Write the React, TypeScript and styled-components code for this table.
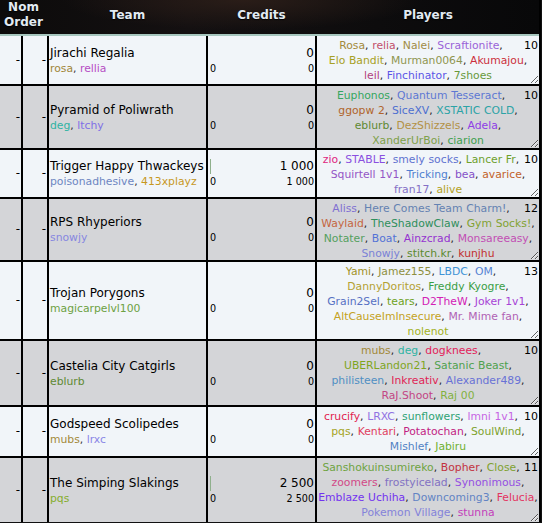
import React from "react";
import styled, { createGlobalStyle } from "styled-components";

const GlobalStyle = createGlobalStyle`
  html, body { margin: 0; padding: 0; background: #111; }
  body { font-family: "DejaVu Sans", Verdana, sans-serif; font-size: 12px; color: #000; }
`;

const COLS = "21px 24px 157px 107px 222px";

const Table = styled.div`
  width: 541px;
  background: #000;
  padding-right: 2px;
  box-sizing: border-box;
`;

const HeaderRow = styled.div`
  display: grid;
  grid-template-columns: ${COLS};
  column-gap: 2px;
  height: 34px;
  border-bottom: 2px solid #a6c6be;
  background: radial-gradient(ellipse 180px 30px at 45% 0%, #2a1d18 0%, rgba(20, 14, 12, 0) 100%),
    linear-gradient(90deg, #0c0b0b 0%, #141011 35%, #0d0c0d 70%, #080809 100%);
`;

const HeadCell = styled.div<{ $span?: number }>`
  grid-column: span ${(p) => p.$span ?? 1};
  display: flex;
  align-items: center;
  justify-content: center;
  text-align: center;
  font-weight: bold;
  font-size: 12px;
  line-height: 15px;
  color: #e2ebf3;
  text-shadow: 0 1px 1px #000;
  padding-bottom: 4px;
`;

const Row = styled.div`
  display: grid;
  grid-template-columns: ${COLS};
  column-gap: 2px;
  margin-bottom: 2px;
`;

const Cell = styled.div<{ $alt: boolean }>`
  background: ${(p) => (p.$alt ? "#d4d5d8" : "#f1f5f9")};
  min-width: 0;
`;

const DashCell = styled(Cell)`
  display: flex;
  align-items: center;
  justify-content: flex-end;
  padding-right: 1px;
  line-height: 15px;
`;

const TeamCell = styled(Cell)`
  display: flex;
  flex-direction: column;
  justify-content: center;
  padding-left: 1px;
  padding-top: 1px;
`;

const TeamName = styled.div`
  font-size: 12px;
  line-height: 15px;
  white-space: nowrap;
  color: #000;
`;

const Managers = styled.div`
  font-size: 10.8px;
  line-height: 15px;
  color: #333;
  white-space: nowrap;
`;

const Name = styled.span<{ $c: string }>`
  color: ${(p) => p.$c};
  white-space: nowrap;
`;

const Sep = styled.span`
  white-space: nowrap;
`;

const CreditsCell = styled(Cell)`
  display: flex;
  align-items: center;
  justify-content: space-between;
  padding: 1px 1px 0 2px;
`;

const CreditsLeft = styled.div`
  display: flex;
  flex-direction: column;
  align-items: flex-start;
`;

const Bar = styled.div<{ $w: number }>`
  height: 15px;
  width: ${(p) => p.$w}px;
  background: #8fb08c;
`;

const SmallNum = styled.div`
  font-size: 9.6px;
  line-height: 15px;
  white-space: nowrap;
`;

const CreditsRight = styled.div`
  display: flex;
  flex-direction: column;
  align-items: flex-end;
`;

const BigNum = styled.div`
  font-size: 12px;
  line-height: 15px;
  white-space: nowrap;
`;

const PlayersCell = styled(Cell)``;

const PlayersBox = styled.div<{ $h: number }>`
  height: ${(p) => p.$h}px;
  width: 222px;
  box-sizing: border-box;
  padding: 2px 1px 0 1px;
  text-align: center;
  font-size: 10.8px;
  word-spacing: 0.25px;
  line-height: 15px;
  color: #222;
  resize: both;
  overflow: hidden;
`;

const Count = styled.span`
  float: right;
  color: #000;
  font-size: 11px;
`;

type P = [string, string];

interface TeamRow {
  team: string;
  managers: P[];
  credits: string;
  bar: number;
  count: number;
  h: number;
  players: P[];
}

const rows: TeamRow[] = [
  {
    team: "Jirachi Regalia",
    managers: [["rosa", "#a0853a"], ["rellia", "#b64ec4"]],
    credits: "0",
    bar: 0,
    count: 10,
    h: 48,
    players: [
      ["Rosa", "#a38a3c"], ["relia", "#c2506b"], ["Nalei", "#a08c45"], ["Scraftionite", "#9a63d8"],
      ["Elo Bandit", "#a7a024"], ["Murman0064", "#8f9550"], ["Akumajou", "#cc2f3c"],
      ["leil", "#b2437e"], ["Finchinator", "#5b55e6"], ["7shoes", "#67993b"],
    ],
  },
  {
    team: "Pyramid of Poliwrath",
    managers: [["deg", "#2fb3a3"], ["ltchy", "#7f6fe6"]],
    credits: "0",
    bar: 0,
    count: 10,
    h: 62,
    players: [
      ["Euphonos", "#34a660"], ["Quantum Tesseract", "#5d78d3"], ["ggopw 2", "#b0642a"], ["SiceXV", "#4d6fd0"],
      ["XSTATIC COLD", "#2ba3a6"], ["eblurb", "#5e8933"], ["DezShizzels", "#b39145"], ["Adela", "#8f3de6"],
      ["XanderUrBoi", "#7fa14a"], ["ciarion", "#3fa04f"],
    ],
  },
  {
    team: "Trigger Happy Thwackeys",
    managers: [["poisonadhesive", "#6d86c2"], ["413xplayz", "#c7981f"]],
    credits: "1 000",
    bar: 1,
    count: 10,
    h: 47,
    players: [
      ["zio", "#e0267e"], ["STABLE", "#8a4fe0"], ["smely socks", "#5f72d0"], ["Lancer Fr", "#6ea02c"],
      ["Squirtell 1v1", "#9456c6"], ["Tricking", "#4f7fd0"], ["bea", "#8552c8"], ["avarice", "#c2622a"],
      ["fran17", "#8470c6"], ["alive", "#b3a11f"],
    ],
  },
  {
    team: "RPS Rhyperiors",
    managers: [["snowjy", "#8787e0"]],
    credits: "0",
    bar: 0,
    count: 12,
    h: 61,
    players: [
      ["Aliss", "#8070d2"], ["Here Comes Team Charm!", "#6482b2"], ["Waylaid", "#c4663f"],
      ["TheShadowClaw", "#2f8f5c"], ["Gym Socks!", "#82a232"], ["Notater", "#55a05e"], ["Boat", "#5372d6"],
      ["Ainzcrad", "#9432d0"], ["Monsareeasy", "#c24fb4"], ["Snowjy", "#7a82d6"], ["stitch.kr", "#5b8a2e"],
      ["kunjhu", "#c2302e"],
    ],
  },
  {
    team: "Trojan Porygons",
    managers: [["magicarpelvl100", "#6da143"]],
    credits: "0",
    bar: 0,
    count: 13,
    h: 77,
    players: [
      ["Yami", "#a29226"], ["Jamez155", "#8e8f3e"], ["LBDC", "#3f93d6"], ["OM", "#5583d3"],
      ["DannyDoritos", "#b4a132"], ["Freddy Kyogre", "#3a9e45"], ["Grain2Sel", "#5670c3"], ["tears", "#6ea121"],
      ["D2TheW", "#d321b5"], ["Joker 1v1", "#a743d6"], ["AltCauseImInsecure", "#c4a223"],
      ["Mr. Mime fan", "#b062b4"], ["nolenot", "#a2b122"],
    ],
  },
  {
    team: "Castelia City Catgirls",
    managers: [["eblurb", "#5e8933"]],
    credits: "0",
    bar: 0,
    count: 10,
    h: 64,
    players: [
      ["mubs", "#a3893a"], ["deg", "#2fb3a3"], ["dogknees", "#e2215a"], ["UBERLandon21", "#7fa51e"],
      ["Satanic Beast", "#4fa14e"], ["philisteen", "#4f8fc3"], ["Inkreativ", "#e01f55"],
      ["Alexander489", "#6872d6"], ["RaJ.Shoot", "#c34684"], ["Raj 00", "#82b13f"],
    ],
  },
  {
    team: "Godspeed Scolipedes",
    managers: [["mubs", "#a3893a"], ["lrxc", "#8a86e6"]],
    credits: "0",
    bar: 0,
    count: 10,
    h: 49,
    players: [
      ["crucify", "#e1234f"], ["LRXC", "#9071e2"], ["sunflowers", "#2ea374"], ["lmni 1v1", "#c765e4"],
      ["pqs", "#a5a424"], ["Kentari", "#e0405e"], ["Potatochan", "#c21f83"], ["SoulWind", "#7ea22e"],
      ["Mishlef", "#5282c4"], ["Jabiru", "#6fb02f"],
    ],
  },
  {
    team: "The Simping Slakings",
    managers: [["pqs", "#86ad2d"]],
    credits: "2 500",
    bar: 1,
    count: 11,
    h: 64,
    players: [
      ["Sanshokuinsumireko", "#6ea342"], ["Bopher", "#c2323f"], ["Close", "#80a131"], ["zoomers", "#d24987"],
      ["frostyicelad", "#8272c3"], ["Synonimous", "#9450e2"], ["Emblaze Uchiha", "#7232f0"],
      ["Downcoming3", "#6283c4"], ["Felucia", "#e33461"], ["Pokemon Village", "#8483da"], ["stunna", "#c33ebb"],
    ],
  },
];

function NameList({ list }: { list: P[] }) {
  return (
    <>
      {list.map(([n, c], i) => (
        <React.Fragment key={n + i}>
          <Sep>
            <Name $c={c}>{n}</Name>
            {i < list.length - 1 ? "," : ""}
          </Sep>
          {i < list.length - 1 ? " " : ""}
        </React.Fragment>
      ))}
    </>
  );
}

export default function App() {
  return (
    <>
      <GlobalStyle />
      <Table>
        <HeaderRow>
          <HeadCell $span={2}>
            Nom
            <br />
            Order
          </HeadCell>
          <HeadCell>Team</HeadCell>
          <HeadCell>Credits</HeadCell>
          <HeadCell>Players</HeadCell>
        </HeaderRow>
        {rows.map((r, i) => {
          const alt = i % 2 === 1;
          return (
            <Row key={r.team}>
              <DashCell $alt={alt}>-</DashCell>
              <DashCell $alt={alt}>-</DashCell>
              <TeamCell $alt={alt}>
                <TeamName>{r.team}</TeamName>
                <Managers>
                  <NameList list={r.managers} />
                </Managers>
              </TeamCell>
              <CreditsCell $alt={alt}>
                <CreditsLeft>
                  <Bar $w={r.bar} />
                  <SmallNum>0</SmallNum>
                </CreditsLeft>
                <CreditsRight>
                  <BigNum>{r.credits}</BigNum>
                  <SmallNum>{r.credits}</SmallNum>
                </CreditsRight>
              </CreditsCell>
              <PlayersCell $alt={alt}>
                <PlayersBox $h={r.h}>
                  <Count>{r.count}</Count>
                  <NameList list={r.players} />
                </PlayersBox>
              </PlayersCell>
            </Row>
          );
        })}
      </Table>
    </>
  );
}
